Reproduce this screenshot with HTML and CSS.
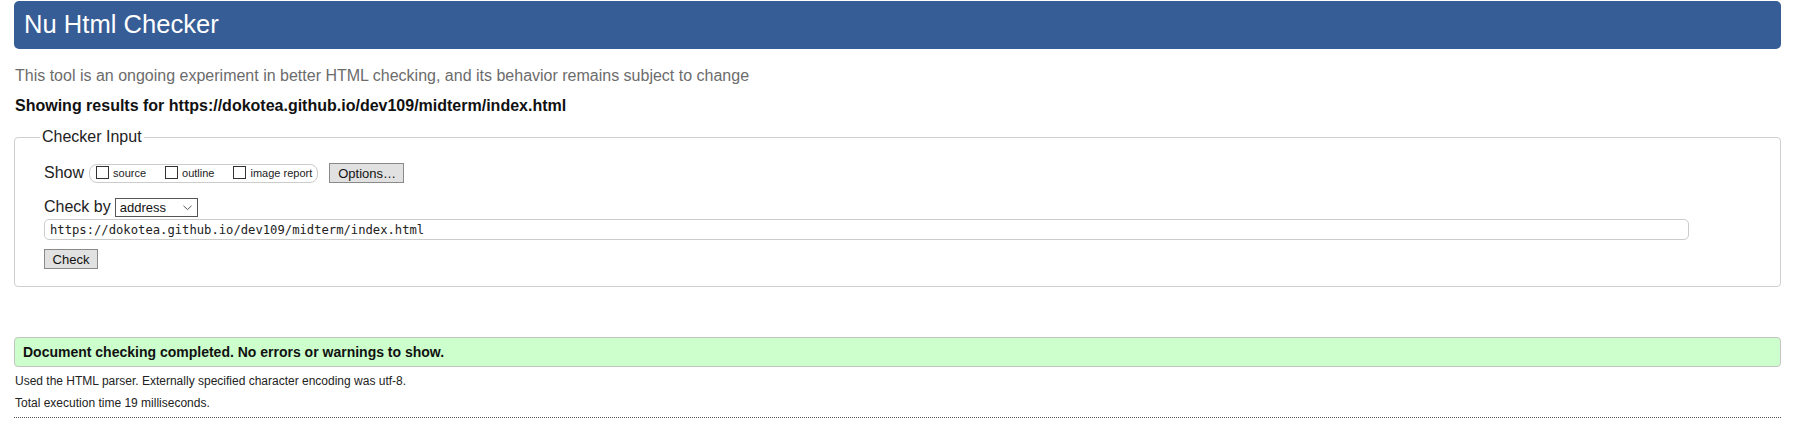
FILE: index.html
```html
<!DOCTYPE html>
<html lang="en">
<head>
<meta charset="utf-8">
<title>Nu Html Checker</title>
<link rel="stylesheet" href="styles.css">
</head>
<body>
<div class="page">
  <h1 class="title">Nu Html Checker</h1>
  <p class="intro">This tool is an ongoing experiment in better HTML checking, and its behavior remains subject to change</p>
  <p class="showing">Showing results for https://dokotea.github.io/dev109/midterm/index.html</p>
  <form class="checker-form">
    <fieldset class="checker">
      <legend class="legend">Checker Input</legend>
      <div class="row row-show">
        <span class="lbl">Show</span>
        <span class="opts">
          <label class="opt"><input type="checkbox" class="cb"><span>source</span></label>
          <label class="opt"><input type="checkbox" class="cb"><span>outline</span></label>
          <label class="opt"><input type="checkbox" class="cb"><span>image report</span></label>
        </span>
        <button type="button" class="btn btn-options">Options…</button>
      </div>
      <div class="row row-by">
        <span class="lbl lbl-by">Check by</span>
        <span class="select-wrap">
          <select class="sel"><option>address</option></select>
          <svg class="chev" width="9" height="6" viewBox="0 0 9 6"><path d="M0.5 0.8 L4.5 4.6 L8.5 0.8" fill="none" stroke="#555" stroke-width="1"/></svg>
        </span>
      </div>
      <input class="url" type="text" value="https://dokotea.github.io/dev109/midterm/index.html">
      <div class="row row-check">
        <button type="button" class="btn btn-check">Check</button>
      </div>
    </fieldset>
  </form>
  <p class="success">Document checking completed. No errors or warnings to show.</p>
  <p class="meta meta-first">Used the HTML parser. Externally specified character encoding was utf-8.</p>
  <p class="meta meta-second">Total execution time 19 milliseconds.</p>
  <div class="sep"></div>
</div>
</body>
</html>
```
FILE: styles.css
```css
html, body {
  margin: 0;
  padding: 0;
  background: #fff;
}
body {
  font-family: "Liberation Sans", Arial, sans-serif;
  color: #222;
}
.page {
  padding: 1px 34px 0 14px;
}
.title {
  margin: 0;
  height: 48px;
  display: flex;
  align-items: center;
  padding: 0 0 2px 10px;
  box-sizing: border-box;
  background: #365d95;
  color: #fff;
  font-size: 25.6px;
  font-weight: normal;
  border-radius: 5px;
}
.intro {
  margin: 18px 0 0 1px;
  font-size: 16px;
  line-height: 18px;
  color: #6c6c6c;
}
.showing {
  margin: 12px 0 0 1px;
  font-size: 16px;
  line-height: 18px;
  font-weight: bold;
  color: #111;
}
.checker-form {
  margin: 13px 0 0 0;
}
.checker {
  margin: 0;
  border: 1px solid #cfcfcf;
  border-radius: 4px;
  padding: 17px 91px 17px 29px;
  min-width: 0;
}
.legend {
  margin-left: -4px;
  padding: 0 2px;
  font-size: 16px;
  line-height: 18px;
  color: #222;
}
.row {
  display: flex;
  align-items: center;
}
.row-show {
  height: 20px;
}
.lbl {
  font-size: 16px;
  line-height: 18px;
  color: #222;
}
.opts {
  display: inline-flex;
  align-items: center;
  height: 19px;
  box-sizing: border-box;
  margin-left: 5px;
  padding: 0 5px 0 6px;
  border: 1px solid #cccccc;
  border-radius: 8px;
  gap: 19px;
}
.opt {
  display: inline-flex;
  align-items: center;
  font-size: 11px;
  line-height: 13px;
  color: #222;
}
.cb {
  appearance: none;
  -webkit-appearance: none;
  width: 13px;
  height: 13px;
  margin: 0 4px 0 0;
  border: 1px solid #333;
  background: #fff;
  box-sizing: border-box;
  position: relative;
  top: -1px;
}
.btn {
  font-family: "Liberation Sans", Arial, sans-serif;
  font-size: 13px;
  line-height: 15px;
  color: #111;
  background: #e1e1e1;
  border: 1px solid #8a8a8a;
  border-radius: 0;
  height: 20px;
  padding: 0 8px;
  margin: 0;
  box-sizing: border-box;
}
.btn-options {
  margin-left: 11px;
  width: 75px;
}
.row-by {
  margin-top: 15px;
  height: 19px;
}
.lbl-by {
  padding-bottom: 1px;
}
.select-wrap {
  position: relative;
  display: inline-block;
  margin-left: 4px;
  height: 19px;
}
.sel {
  appearance: none;
  -webkit-appearance: none;
  width: 83px;
  height: 19px;
  box-sizing: border-box;
  border: 1px solid #555;
  border-radius: 0;
  background: #fff;
  padding: 0 0 0 4px;
  margin: 0;
  font-family: "Liberation Sans", Arial, sans-serif;
  font-size: 13px;
  color: #111;
}
.chev {
  position: absolute;
  right: 6px;
  top: 7px;
}
.url {
  display: block;
  width: 100%;
  height: 21px;
  box-sizing: border-box;
  margin: 2px 0 0 0;
  padding: 0 5px;
  border: 1px solid #cccccc;
  border-radius: 5px;
  font-family: "DejaVu Sans Mono", "Liberation Mono", monospace;
  font-size: 12.2px;
  color: #222;
  background: #fff;
}
.row-check {
  margin-top: 9px;
}
.btn-check {
  width: 54px;
  padding: 0;
}
.success {
  margin: 50px 0 0 0;
  padding: 6px 8px;
  font-size: 14px;
  line-height: 16px;
  font-weight: bold;
  color: #111;
  background: #ccffcc;
  border: 1px solid #c4c4c4;
  border-radius: 4px;
}
.meta {
  margin: 0 0 0 1px;
  font-size: 12px;
  line-height: 21px;
  color: #222;
}
.meta-first {
  margin-top: 4px;
}
.meta-second {
  margin-top: 1px;
}
.sep {
  margin-top: 3px;
  border-bottom: 1px dotted #555;
}
```
